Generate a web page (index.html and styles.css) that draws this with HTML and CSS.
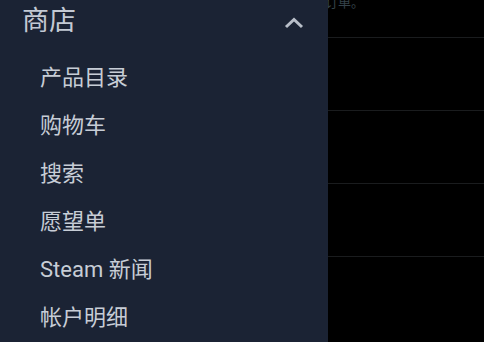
FILE: index.html
```html
<!DOCTYPE html>
<html lang="zh-CN">
<head>
    <meta charset="UTF-8">
    <meta name="viewport" content="width=device-width, initial-scale=1.0">
    <title>商店</title>
    <link rel="stylesheet" href="styles.css">
</head>
<body>
    <div class="page">
        <div class="feed">
            <div class="feed-row first"><span class="feed-text">查看您的订单。</span></div>
            <div class="feed-row"></div>
            <div class="feed-row"></div>
            <div class="feed-row"></div>
            <div class="feed-row last"></div>
        </div>

        <div class="drawer">
            <div class="drawer-header">
                <span class="drawer-title">商店</span>
                <svg class="chevron" width="20" height="12" viewBox="0 0 20 12">
                    <path d="M2 10 L10 2.5 L18 10" fill="none" stroke="#b9bfc9" stroke-width="3"/>
                </svg>
            </div>
            <div class="menu">
                <a href="#catalog">产品目录</a>
                <a href="#cart">购物车</a>
                <a href="#search">搜索</a>
                <a href="#wishlist">愿望单</a>
                <a href="#news">Steam 新闻</a>
                <a href="#account">帐户明细</a>
            </div>
        </div>
    </div>
</body>
</html>
```

FILE: styles.css
```css
body {
    margin: 0;
    background-color: #000;
    font-family: Roboto, "Noto Sans CJK SC", sans-serif;
    overflow: hidden;
}

.page {
    position: relative;
    width: 484px;
    height: 342px;
    overflow: hidden;
}

.feed-row {
    height: 72px;
    border-bottom: 1px solid #1a1c1e;
}

.feed-row.first {
    height: 38px;
    display: flex;
    justify-content: flex-end;
    padding-right: 120px;
    box-sizing: border-box;
}

.feed-row.last {
    border-bottom: none;
}

.feed-text {
    font-size: 13px;
    line-height: 13px;
    margin-top: -4px;
    color: #34424a;
}

/* drawer lies over the feed */
.drawer {
    position: absolute;
    left: 0;
    top: 0;
    width: 328px;
    height: 100%;
    background-color: #1b2334;
}

.drawer-header {
    display: flex;
    align-items: center;
    justify-content: space-between;
    height: 44px;
    padding: 0 24px 0 22px;
    margin-bottom: 10px;
}

.drawer-title {
    font-size: 27px;
    line-height: 27px;
    margin-top: -1px;
    color: #c3c9d3;
}

.chevron {
    margin-top: 1px;
}

.menu a {
    display: block;
    height: 48px;
    line-height: 48px;
    padding-left: 40px;
    font-size: 22px;
    color: #c7cdd6;
    text-decoration: none;
}
```
